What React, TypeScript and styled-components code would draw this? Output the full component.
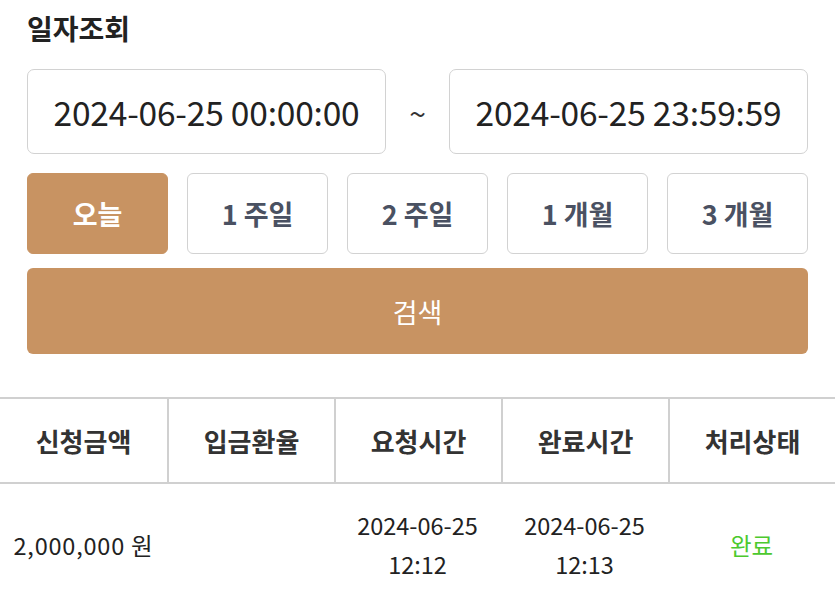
import React from "react";
import styled, { createGlobalStyle } from "styled-components";

const GlobalStyle = createGlobalStyle`
  html, body { margin: 0; padding: 0; background: #fff; }
  body { font-family: "Noto Sans CJK KR", "Noto Sans", sans-serif; color: #222; }
  * { box-sizing: border-box; }
`;

const BRAND = "#c89362";

const Page = styled.div`
  width: 835px;
  padding-top: 8px;
`;

const Filter = styled.section`
  padding: 0 27px;
  display: flex;
  flex-direction: column;
`;

const Title = styled.h2`
  margin: 0;
  height: 40px;
  line-height: 40px;
  font-size: 28px;
  font-weight: 700;
  color: #222;
`;

const RangeRow = styled.div`
  margin-top: 21px;
  display: flex;
  align-items: center;
  justify-content: space-between;
`;

const DateBox = styled.div`
  width: 359px;
  height: 85px;
  border: 1.5px solid #d2d2d2;
  border-radius: 7px;
  display: flex;
  align-items: center;
  justify-content: center;
  font-size: 33.5px;
  color: #222;
  letter-spacing: -0.2px;
`;

const Tilde = styled.span`
  font-size: 30px;
  color: #333;
`;

const PeriodRow = styled.div`
  margin-top: 19px;
  display: grid;
  grid-template-columns: repeat(5, 1fr);
  gap: 19px;
`;

const PeriodButton = styled.button<{ $active?: boolean }>`
  height: 81px;
  border-radius: 6px;
  border: 1.5px solid ${(p) => (p.$active ? BRAND : "#d2d2d2")};
  background: ${(p) => (p.$active ? BRAND : "#fff")};
  color: ${(p) => (p.$active ? "#fff" : "#4a5162")};
  font-family: inherit;
  font-size: 27px;
  font-weight: 700;
  padding: 0;
`;

const SearchButton = styled.button`
  margin-top: 14px;
  height: 86px;
  border: none;
  border-radius: 6px;
  background: ${BRAND};
  color: #fff;
  font-family: inherit;
  font-size: 27px;
  font-weight: 400;
`;

const Table = styled.div`
  margin-top: 43px;
  width: 835px;
`;

const Row = styled.div<{ $head?: boolean }>`
  display: grid;
  grid-template-columns: repeat(5, 1fr);
  height: ${(p) => (p.$head ? "87px" : "120px")};
  border-top: ${(p) => (p.$head ? "2px solid #d0d0d0" : "none")};
  border-bottom: ${(p) => (p.$head ? "2px solid #d0d0d0" : "none")};
`;

const HeadCell = styled.div`
  display: flex;
  align-items: center;
  justify-content: center;
  font-size: 26px;
  font-weight: 700;
  color: #333;
  & + & { border-left: 2px solid #d0d0d0; }
`;

const Cell = styled.div<{ $color?: string }>`
  display: flex;
  align-items: center;
  justify-content: center;
  text-align: center;
  font-size: 23.5px;
  line-height: 39px;
  color: ${(p) => p.$color || "#222"};
  padding-top: 2px;
`;

const Amount = styled(Cell)`
  letter-spacing: 0.8px;
`;

const periods = ["오늘", "1 주일", "2 주일", "1 개월", "3 개월"];
const heads = ["신청금액", "입금환율", "요청시간", "완료시간", "처리상태"];

export default function App() {
  return (
    <Page>
      <GlobalStyle />
      <Filter>
        <Title>일자조회</Title>
        <RangeRow>
          <DateBox>2024-06-25 00:00:00</DateBox>
          <Tilde>~</Tilde>
          <DateBox>2024-06-25 23:59:59</DateBox>
        </RangeRow>
        <PeriodRow>
          {periods.map((p, i) => (
            <PeriodButton key={p} $active={i === 0}>
              {p}
            </PeriodButton>
          ))}
        </PeriodRow>
        <SearchButton>검색</SearchButton>
      </Filter>
      <Table>
        <Row $head>
          {heads.map((h) => (
            <HeadCell key={h}>{h}</HeadCell>
          ))}
        </Row>
        <Row>
          <Amount>2,000,000 원</Amount>
          <Cell></Cell>
          <Cell>
            2024-06-25
            <br />
            12:12
          </Cell>
          <Cell>
            2024-06-25
            <br />
            12:13
          </Cell>
          <Cell $color="#4cc92e">완료</Cell>
        </Row>
      </Table>
    </Page>
  );
}
